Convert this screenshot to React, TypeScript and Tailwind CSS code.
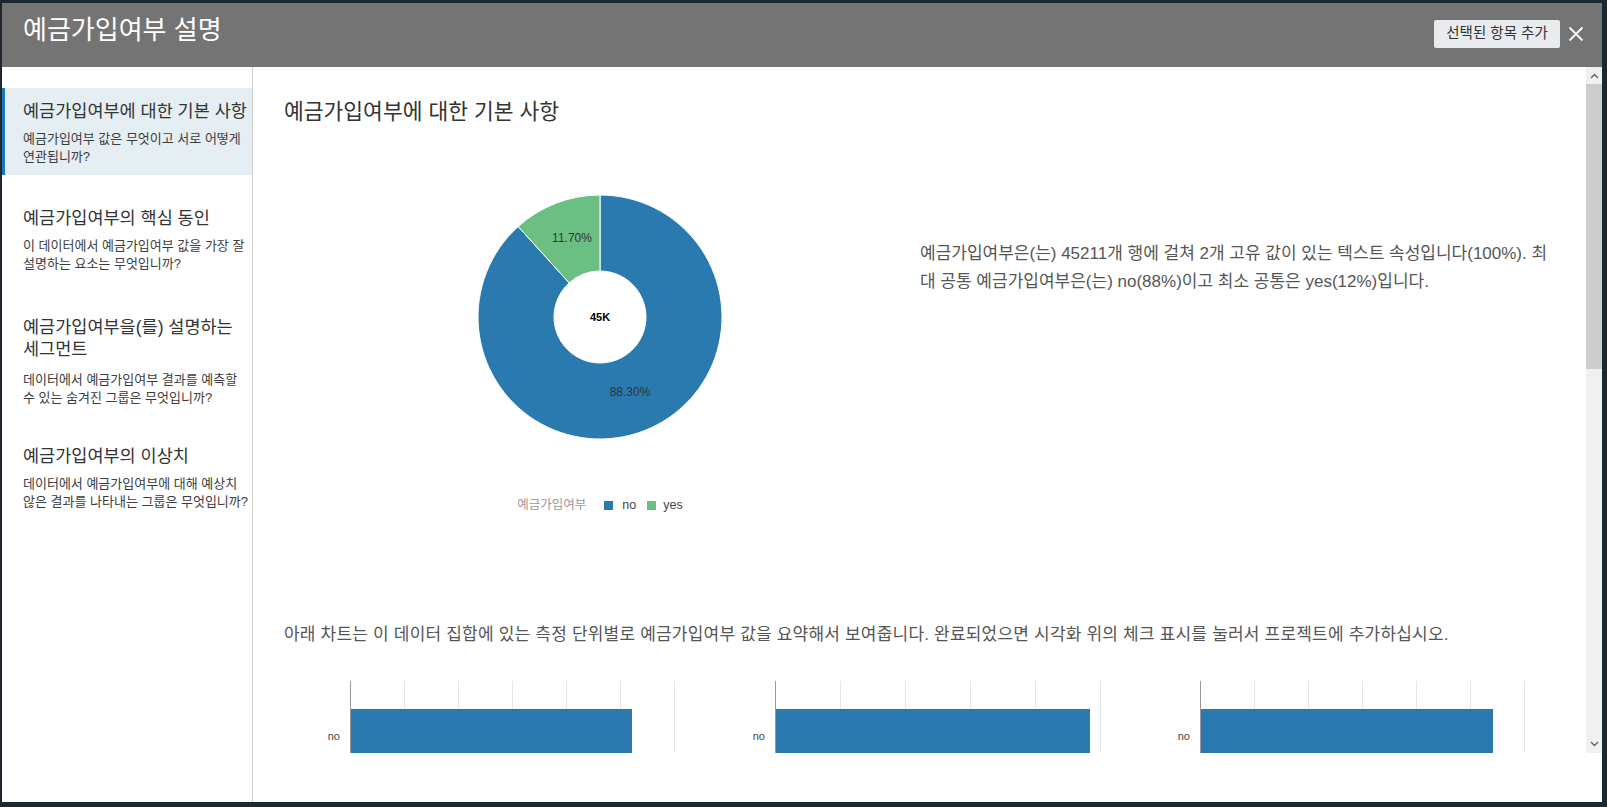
const FONT = "font-['Liberation_Sans','Noto_Sans_CJK_KR',sans-serif]"

const BLUE = '#2a7ab0'
const GREEN = '#6bbf82'

const navItems = [
  {
    title: ['예금가입여부에 대한 기본 사항'],
    desc: ['예금가입여부 값은 무엇이고 서로 어떻게', '연관됩니까?'],
    active: true,
  },
  {
    title: ['예금가입여부의 핵심 동인'],
    desc: ['이 데이터에서 예금가입여부 값을 가장 잘', '설명하는 요소는 무엇입니까?'],
  },
  {
    title: ['예금가입여부을(를) 설명하는', '세그먼트'],
    desc: ['데이터에서 예금가입여부 결과를 예측할', '수 있는 숨겨진 그룹은 무엇입니까?'],
  },
  {
    title: ['예금가입여부의 이상치'],
    desc: ['데이터에서 예금가입여부에 대해 예상치', '않은 결과를 나타내는 그룹은 무엇입니까?'],
  },
]

const barCharts = [
  { step: 54, lines: 6, bar: 282 },
  { step: 65, lines: 5, bar: 315 },
  { step: 54, lines: 6, bar: 293 },
]

function Donut() {
  return (
    <svg width="244" height="244" viewBox="0 0 244 244">
      <path
        d="M 122 0 A 122 122 0 1 1 40.17 31.51 L 91.15 87.88 A 46 46 0 1 0 122 76 Z"
        fill={BLUE}
        stroke="#fff"
        strokeWidth="1"
      />
      <path
        d="M 40.17 31.51 A 122 122 0 0 1 122 0 L 122 76 A 46 46 0 0 0 91.15 87.88 Z"
        fill={GREEN}
        stroke="#fff"
        strokeWidth="1"
      />
      <text x="94" y="47" textAnchor="middle" fontSize="12" fill="#333" fontFamily="Liberation Sans, sans-serif">
        11.70%
      </text>
      <text x="152" y="201" textAnchor="middle" fontSize="12" fill="#333" fontFamily="Liberation Sans, sans-serif">
        88.30%
      </text>
      <text x="122" y="126" textAnchor="middle" fontSize="11" fontWeight="700" fill="#000" fontFamily="Liberation Sans, sans-serif">
        45K
      </text>
    </svg>
  )
}

function BarChart({ step, lines, bar }: { step: number; lines: number; bar: number }) {
  return (
    <div className="flex w-[425px]">
      <div className="w-[66px] pr-[10px] pt-[48px] text-right text-[11px] leading-[14px] text-[#444]">no</div>
      <svg width="330" height="90" viewBox="0 0 330 90">
        {Array.from({ length: lines }, (_, i) => (
          <line key={i} x1={(i + 1) * step + 0.5} y1="0" x2={(i + 1) * step + 0.5} y2="90" stroke="#e6e6e6" strokeWidth="1" />
        ))}
        <rect x="0" y="28" width={bar} height="62" fill={BLUE} />
        <line x1="0.5" y1="0" x2="0.5" y2="90" stroke="#999" strokeWidth="1" />
      </svg>
    </div>
  )
}

function Sidebar() {
  return (
    <aside className="w-[251px] shrink-0 border-r border-[#cfcfcf] bg-white pt-[21px]">
      <div className="flex flex-col gap-[20px]">
        {navItems.map((item) => {
          const twoLine = item.title.length > 1
          return (
            <div
              key={item.title[0]}
              className={
                item.active
                  ? 'border-l-[3px] border-[#1f77bb] bg-[#e4eef3] pl-[18px] pt-[12px] pb-[9px]'
                  : twoLine
                    ? 'border-l-[3px] border-transparent pl-[18px] pt-[12px] pb-[6px]'
                    : 'border-l-[3px] border-transparent pl-[18px] pt-[12px] pb-[9px]'
              }
            >
              <div className={twoLine ? 'pt-[2px] text-[17.5px] leading-[22px] text-[#333]' : 'text-[17.5px] leading-[22px] text-[#333]'}>
                {item.title.map((t) => (
                  <div key={t} className="whitespace-nowrap">{t}</div>
                ))}
              </div>
              <div
                className={
                  twoLine
                    ? 'mt-[11px] text-[13px] leading-[18px] text-[#3c3c3c]'
                    : 'mt-[8px] text-[13px] leading-[18px] text-[#3c3c3c]'
                }
              >
                {item.desc.map((d) => (
                  <div key={d} className="whitespace-nowrap">{d}</div>
                ))}
              </div>
            </div>
          )
        })}
      </div>
    </aside>
  )
}

function Scrollbar() {
  return (
    <div className="flex w-[16px] shrink-0 flex-col bg-[#f0f0f0]">
      <div className="flex h-[17px] items-center justify-center">
        <svg width="9" height="6" viewBox="0 0 9 6">
          <path d="M1 5 L4.5 1.5 L8 5" fill="none" stroke="#606060" strokeWidth="1.4" />
        </svg>
      </div>
      <div className="h-[285px] bg-[#cdcdcd]" />
      <div className="flex-1" />
      <div className="flex h-[18px] items-center justify-center">
        <svg width="9" height="6" viewBox="0 0 9 6">
          <path d="M1 1 L4.5 4.5 L8 1" fill="none" stroke="#606060" strokeWidth="1.4" />
        </svg>
      </div>
    </div>
  )
}

export default function App() {
  return (
    <div className={`h-[807px] w-full bg-[#1d2731] pt-[3px] pl-[2px] ${FONT}`}>
      <div className="flex h-[799px] w-[1600px] flex-col bg-white">
        {/* Header */}
        <header className="flex h-[64px] shrink-0 items-start justify-between bg-[#747474] pl-[21px] pr-[18px]">
          <h1 className="pt-[11px] text-[26px] leading-[32px] font-normal text-white">예금가입여부 설명</h1>
          <div className="flex items-center gap-[8px] pt-[17px]">
            <button className="h-[28px] w-[126px] rounded-[2px] bg-[#e9ecef] text-[14.5px] text-[#333]">
              선택된 항목 추가
            </button>
            <svg width="16" height="16" viewBox="0 0 16 16">
              <path d="M1.5 1.5 L14.5 14.5 M14.5 1.5 L1.5 14.5" stroke="#fff" strokeWidth="1.8" fill="none" />
            </svg>
          </div>
        </header>

        <div className="flex flex-1">
          <Sidebar />

          <div className="flex flex-1 flex-col">
            <div className="flex h-[686px]">
              <main className="flex-1 overflow-hidden pl-[31px] pt-[31px]">
                <h2 className="text-[21.5px] leading-[28px] font-normal text-[#333]">예금가입여부에 대한 기본 사항</h2>

                <div className="mt-[69px] flex">
                  <div className="flex w-[632px] flex-col items-center">
                    <Donut />
                    <div className="mt-[58px] flex items-center text-[12.5px] leading-[16px]">
                      <span className="mr-[18px] text-[#999]">예금가입여부</span>
                      <span className="mr-[9px] h-[9px] w-[9px] bg-[#2a7ab0]" />
                      <span className="mr-[11px] text-[#444]">no</span>
                      <span className="mr-[7px] h-[9px] w-[9px] bg-[#6bbf82]" />
                      <span className="text-[#444]">yes</span>
                    </div>
                  </div>
                  <div className="pl-[4px] pt-[45px] text-[17px] leading-[28px] text-[#555]">
                    <p className="whitespace-nowrap">예금가입여부은(는) 45211개 행에 걸쳐 2개 고유 값이 있는 텍스트 속성입니다(100%). 최</p>
                    <p className="whitespace-nowrap">대 공통 예금가입여부은(는) no(88%)이고 최소 공통은 yes(12%)입니다.</p>
                  </div>
                </div>

                <p className="mt-[110px] whitespace-nowrap text-[17px] leading-[24px] tracking-[0.2px] text-[#555]">
                  아래 차트는 이 데이터 집합에 있는 측정 단위별로 예금가입여부 값을 요약해서 보여줍니다. 완료되었으면 시각화 위의 체크 표시를 눌러서 프로젝트에 추가하십시오.
                </p>

                <div className="mt-[34px] flex">
                  {barCharts.map((c, i) => (
                    <BarChart key={i} {...c} />
                  ))}
                </div>
              </main>
              <Scrollbar />
            </div>
            <div className="flex-1 bg-white" />
          </div>
        </div>
      </div>
    </div>
  )
}
